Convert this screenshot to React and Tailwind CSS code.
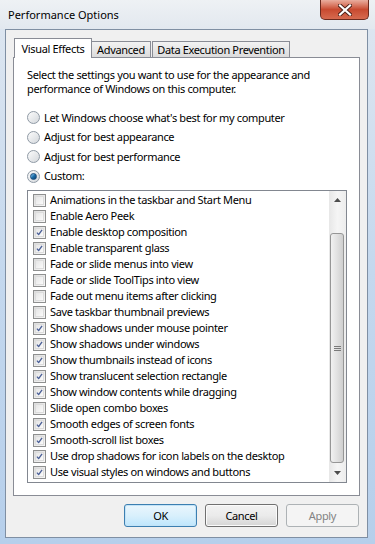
import React from "react";

const effects = [
  ["Animations in the taskbar and Start Menu", false],
  ["Enable Aero Peek", false],
  ["Enable desktop composition", true],
  ["Enable transparent glass", true],
  ["Fade or slide menus into view", false],
  ["Fade or slide ToolTips into view", false],
  ["Fade out menu items after clicking", false],
  ["Save taskbar thumbnail previews", false],
  ["Show shadows under mouse pointer", true],
  ["Show shadows under windows", true],
  ["Show thumbnails instead of icons", true],
  ["Show translucent selection rectangle", true],
  ["Show window contents while dragging", true],
  ["Slide open combo boxes", false],
  ["Smooth edges of screen fonts", true],
  ["Smooth-scroll list boxes", true],
  ["Use drop shadows for icon labels on the desktop", true],
  ["Use visual styles on windows and buttons", true],
];

const radios = [
  ["Let Windows choose what's best for my computer", false],
  ["Adjust for best appearance", false],
  ["Adjust for best performance", false],
  ["Custom:", true],
];

// small Win7-style radio button
const Radio = ({ checked }) => (
  <span className="w-[13px] h-[13px] rounded-full border border-[#8f9aa5] bg-gradient-to-br from-[#fcfcfc] to-[#d4d8dc] flex items-center justify-center shrink-0">
    {checked && (
      <span className="w-[7px] h-[7px] rounded-full bg-gradient-to-br from-[#8ed2f8] via-[#1a6ea9] to-[#0b3d6d] border border-[#1c4d7c]" />
    )}
  </span>
);

const Check = ({ checked }) => (
  <span className="w-[13px] h-[13px] border border-[#8e8f8f] bg-gradient-to-br from-[#dcdcdc] to-[#f8f8f8] flex items-center justify-center shrink-0">
    <span className="w-[9px] h-[9px] border border-[#dcdcdc] bg-gradient-to-br from-[#e6e6e6] to-[#fafafa] flex items-center justify-center">
      {checked && (
        <svg width="9" height="9" viewBox="0 0 9 9">
          <path d="M1.2 4.6 L3.4 7.2 L7.8 1" fill="none" stroke="#4a5f97" strokeWidth="1.7" strokeLinejoin="round" />
        </svg>
      )}
    </span>
  </span>
);

const Scrollbar = () => (
  <div className="w-[17px] bg-gradient-to-r from-[#e7e7e7] via-[#f5f5f5] to-[#ededed] flex flex-col">
    <div className="h-[17px] flex items-center justify-center">
      <svg width="7" height="4" viewBox="0 0 7 4">
        <path d="M0 4 L3.5 0 L7 4 Z" fill="#4d4d4d" />
      </svg>
    </div>
    <div className="h-[25px]" />
    <div className="h-[230px] mr-[2px] ml-[1px] rounded-[3px] border border-[#969696] bg-gradient-to-r from-[#f1f1f1] via-[#e1e1e1] to-[#cfcfcf] flex items-center justify-center">
      <svg width="7" height="7" viewBox="0 0 7 7">
        <path d="M0 1.5 H7 M0 3.5 H7 M0 5.5 H7" stroke="#7a7a7a" strokeWidth="1" />
      </svg>
    </div>
    <div className="flex-1 flex items-center justify-center">
      <svg width="7" height="4" viewBox="0 0 7 4">
        <path d="M0 0 L3.5 4 L7 0 Z" fill="#4d4d4d" />
      </svg>
    </div>
  </div>
);

const App = () => {
  return (
    <div
      className="w-[375px] h-[544px] overflow-hidden flex flex-col bg-gradient-to-b from-[#dfe7f0] via-[#c4d8ee] to-[#b6cfeb] text-[11px] tracking-[-0.35px] text-black"
      style={{ fontFamily: '"Noto Sans", "Open Sans", sans-serif' }}
    >
      {/* title bar */}
      <div className="h-[29px] flex justify-between shrink-0 bg-gradient-to-b from-[#eef1f4] to-[#e2e8ef]">
        <div className="pl-[8px] pt-[7px] text-[11px] tracking-normal leading-[16px]">Performance Options</div>
        <div className="mr-[6px] w-[49px] h-[20px] rounded-b-[5px] border border-t-0 border-[#6b2a1e] bg-gradient-to-b from-[#e9ad9e] via-[#c84a30] to-[#d66a4f] flex items-center justify-center">
          <svg width="14" height="12" viewBox="0 0 14 12">
            <path d="M2 1.5 L12 10.5 M12 1.5 L2 10.5" stroke="#4a2018" strokeWidth="4" strokeLinecap="square" />
            <path d="M2 1.5 L12 10.5 M12 1.5 L2 10.5" stroke="#ffffff" strokeWidth="2.2" strokeLinecap="square" />
          </svg>
        </div>
      </div>

      {/* client area */}
      <div className="flex-1 ml-[5px] mr-[7px] mb-[6px] border border-[#7f8fa3] bg-[#f0f0f0] flex flex-col pl-[7px] pr-[7px] pt-[8px]">
        {/* tabs */}
        <div className="flex items-end h-[20px] -mb-px pl-px relative z-10">
          <div className="w-[78px] h-[20px] bg-white border border-b-0 border-[#898c95] flex items-start justify-center pt-[2px] leading-[15px]">
            Visual Effects
          </div>
          <div className="w-[59px] h-[17px] border border-l-0 border-[#898c95] bg-gradient-to-b from-[#f2f2f2] to-[#dcdcdc] flex items-center justify-center leading-[15px]">
            Advanced
          </div>
          <div className="w-[138px] h-[17px] ml-[1px] border border-[#898c95] bg-gradient-to-b from-[#f2f2f2] to-[#dcdcdc] flex items-center justify-center leading-[15px]">
            Data Execution Prevention
          </div>
        </div>

        {/* tab page */}
        <div className="h-[439px] border border-[#898c95] bg-white pl-[13px] pt-[10px] flex flex-col">
          <p className="leading-[14px] w-[300px]">
            Select the settings you want to use for the appearance and performance of Windows on this computer.
          </p>

          <div className="mt-[12px] flex flex-col">
            {radios.map(([label, checked]) => (
              <div key={label} className="h-[19.5px] flex items-center gap-[4px]">
                <Radio checked={checked} />
                <span className="leading-[14px]">{label}</span>
              </div>
            ))}
          </div>

          <div className="mt-[4px] w-[320px] h-[293px] border border-[#828790] bg-white flex">
            <div className="flex-1 flex flex-col pt-px">
              {effects.map(([label, checked]) => (
                <div key={label} className="h-[16px] flex items-center pl-[5px] gap-[4px]">
                  <Check checked={checked} />
                  <span className="leading-[14px] whitespace-nowrap">{label}</span>
                </div>
              ))}
            </div>
            <Scrollbar />
          </div>
        </div>

        {/* buttons */}
        <div className="flex justify-end gap-[8px] mt-[8px] pr-px">
          <button className="w-[73px] h-[23px] rounded-[3px] border border-[#3c7fb1] bg-gradient-to-b from-[#eaf6fd] via-[#d9f0fc] to-[#bee6fd] shadow-[inset_0_0_0_1px_#c3e3f7] leading-[14px]">
            OK
          </button>
          <button className="w-[73px] h-[23px] rounded-[3px] border border-[#707070] bg-gradient-to-b from-[#f2f2f2] via-[#ebebeb] to-[#d5d5d5] shadow-[inset_0_0_0_1px_#fbfbfb] leading-[14px]">
            Cancel
          </button>
          <button className="w-[73px] h-[23px] rounded-[3px] border border-[#adb2b5] bg-[#f4f4f4] text-[#838383] leading-[14px]">
            Apply
          </button>
        </div>
      </div>
    </div>
  );
};

export default App;
